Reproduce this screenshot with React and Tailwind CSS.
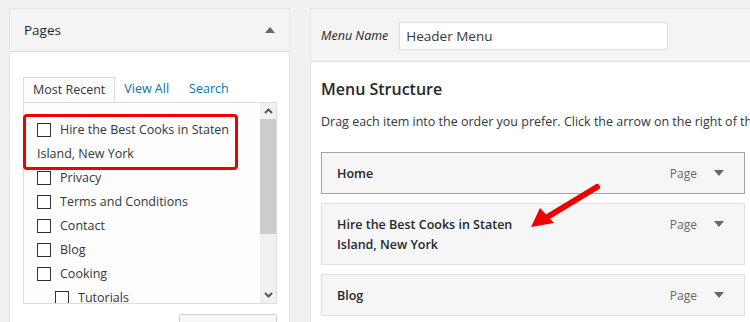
import { useState } from 'react'

const pages = [
  { title: 'Privacy' },
  { title: 'Terms and Conditions' },
  { title: 'Contact' },
  { title: 'Blog' },
  { title: 'Cooking' },
  { title: 'Tutorials', child: true },
]

const menuItems = [
  { title: 'Home', active: true },
  { title: ['Hire the Best Cooks in Staten', 'Island, New York'] },
  { title: 'Blog' },
]

function Box({ indent }) {
  return <span className={`inline-block w-[14px] h-[14px] border border-[#333] bg-white shrink-0 ${indent ? 'ml-[18px]' : ''}`} />
}

function PageRow({ page }) {
  return (
    <div className="flex items-center h-[24px]">
      <Box indent={page.child} />
      <span className="ml-[9px]">{page.title}</span>
    </div>
  )
}

export default function App() {
  const [tab, setTab] = useState('recent')

  return (
    <div className="w-[750px] h-[322px] overflow-hidden bg-[#f1f1f1] text-[12.5px] text-[#32373c] flex items-start gap-[20px] pl-[9px] pt-[8px]" style={{ fontFamily: '"Open Sans", "Noto Sans", sans-serif' }}>
      <div className="w-[281px] shrink-0 bg-white border border-[#e5e5e5] flex flex-col">
        <div className="h-[43px] shrink-0 bg-[#f4f4f4] border-b border-[#dcdcdc] flex items-center justify-between pl-[14px] pr-[14px]">
          <span className="text-[13.5px] text-[#23282d]">Pages</span>
          <span className="w-0 h-0 border-l-[5px] border-r-[5px] border-b-[6px] border-l-transparent border-r-transparent border-b-[#666]" />
        </div>
        <div className="pl-[13px] pr-[12px] pt-[25px]">
          <div className="flex items-end h-[25px]">
            <button onClick={() => setTab('recent')} className="h-[26px] px-[9px] border border-b-0 border-[#dcdcdc] bg-[#fdfdfd] text-[#32373c] relative top-[1px]">Most Recent</button>
            <button onClick={() => setTab('all')} className="h-[25px] pl-[9px] pr-[10px] text-[#0073aa]">View All</button>
            <button onClick={() => setTab('search')} className="h-[25px] pl-[10px] text-[#0073aa]">Search</button>
          </div>
          <div className="relative h-[202px] border border-[#dcdcdc] bg-[#fdfdfd] flex">
            <div className="flex-1 pl-[13px] pt-[15px] overflow-hidden">
              <div className="flex items-center h-[24px]">
                <Box />
                <span className="ml-[9px]">Hire the Best Cooks in Staten</span>
              </div>
              <div className="h-[24px] flex items-center">Island, New York</div>
              {pages.map((p) => <PageRow key={p.title} page={p} />)}
            </div>
            <div className="w-[16px] flex flex-col bg-[#f1f1f1]">
              <div className="h-[16px] flex items-center justify-center">
                <svg width="9" height="6" viewBox="0 0 9 6"><path d="M1 5 L4.5 1.5 L8 5" stroke="#555" strokeWidth="2" fill="none" /></svg>
              </div>
              <div className="h-[115px] bg-[#cdcdcd]" />
              <div className="flex-1" />
              <div className="h-[16px] flex items-center justify-center">
                <svg width="9" height="6" viewBox="0 0 9 6"><path d="M1 1 L4.5 4.5 L8 1" stroke="#555" strokeWidth="2" fill="none" /></svg>
              </div>
            </div>
            <div className="absolute left-[-1px] top-[11px] w-[215px] h-[56px] border-[3px] border-[#ee0000] rounded-[4px]" />
          </div>
          <div className="flex justify-end mt-[10px]">
            <div className="w-[98px] h-[30px] border border-[#cccccc] rounded-[3px] bg-[#f7f7f7]" />
          </div>
        </div>
      </div>

      <div className="flex-1 h-[330px] bg-white border border-[#e5e5e5] border-r-0 flex flex-col relative">
        <div className="h-[53px] shrink-0 bg-[#f4f4f4] border-b border-[#dcdcdc] flex items-center pl-[10px] pt-[2px]">
          <span className="italic text-[12.5px] text-[#23282d]">Menu Name</span>
          <input defaultValue="Header Menu" className="ml-[11px] w-[269px] h-[28px] border border-[#dddddd] bg-white px-[6px] text-[13.5px] text-[#32373c] outline-none" />
        </div>
        <div className="pl-[10px] pt-[17px]">
          <h2 className="text-[16px] font-semibold text-[#23282d] leading-[20px]">Menu Structure</h2>
          <p className="mt-[14px] whitespace-nowrap">Drag each item into the order you prefer. Click the arrow on the right of the item to reveal additional configuration options.</p>
          <div className="mt-[20px] w-[424px] flex flex-col gap-[9px]">
            {menuItems.map((m, i) => (
              <div key={i} className={`bg-[#f6f6f6] border flex justify-between pl-[15px] pr-[20px] pt-[11px] pb-[9px] ${m.active ? 'border-[#a0a5aa]' : 'border-[#dfdfdf]'}`}>
                <div className="text-[12.5px] text-[#23282d] font-semibold leading-[20px]">
                  {Array.isArray(m.title) ? m.title.map((t) => <div key={t}>{t}</div>) : m.title}
                </div>
                <div className="flex items-start gap-[17px] leading-[20px]">
                  <span className="text-[12px] text-[#666]">Page</span>
                  <span className="mt-[6px] w-0 h-0 border-l-[5px] border-r-[5px] border-t-[6px] border-l-transparent border-r-transparent border-t-[#666]" />
                </div>
              </div>
            ))}
          </div>
        </div>
        <svg className="absolute left-[216px] top-[172px]" width="76" height="52" viewBox="0 0 76 52">
          <path d="M70 6 L22 35" stroke="#ee0000" strokeWidth="6" strokeLinecap="round" />
          <path d="M4 46 L13 27 L27 42 Z" fill="#ee0000" />
        </svg>
      </div>
    </div>
  )
}
